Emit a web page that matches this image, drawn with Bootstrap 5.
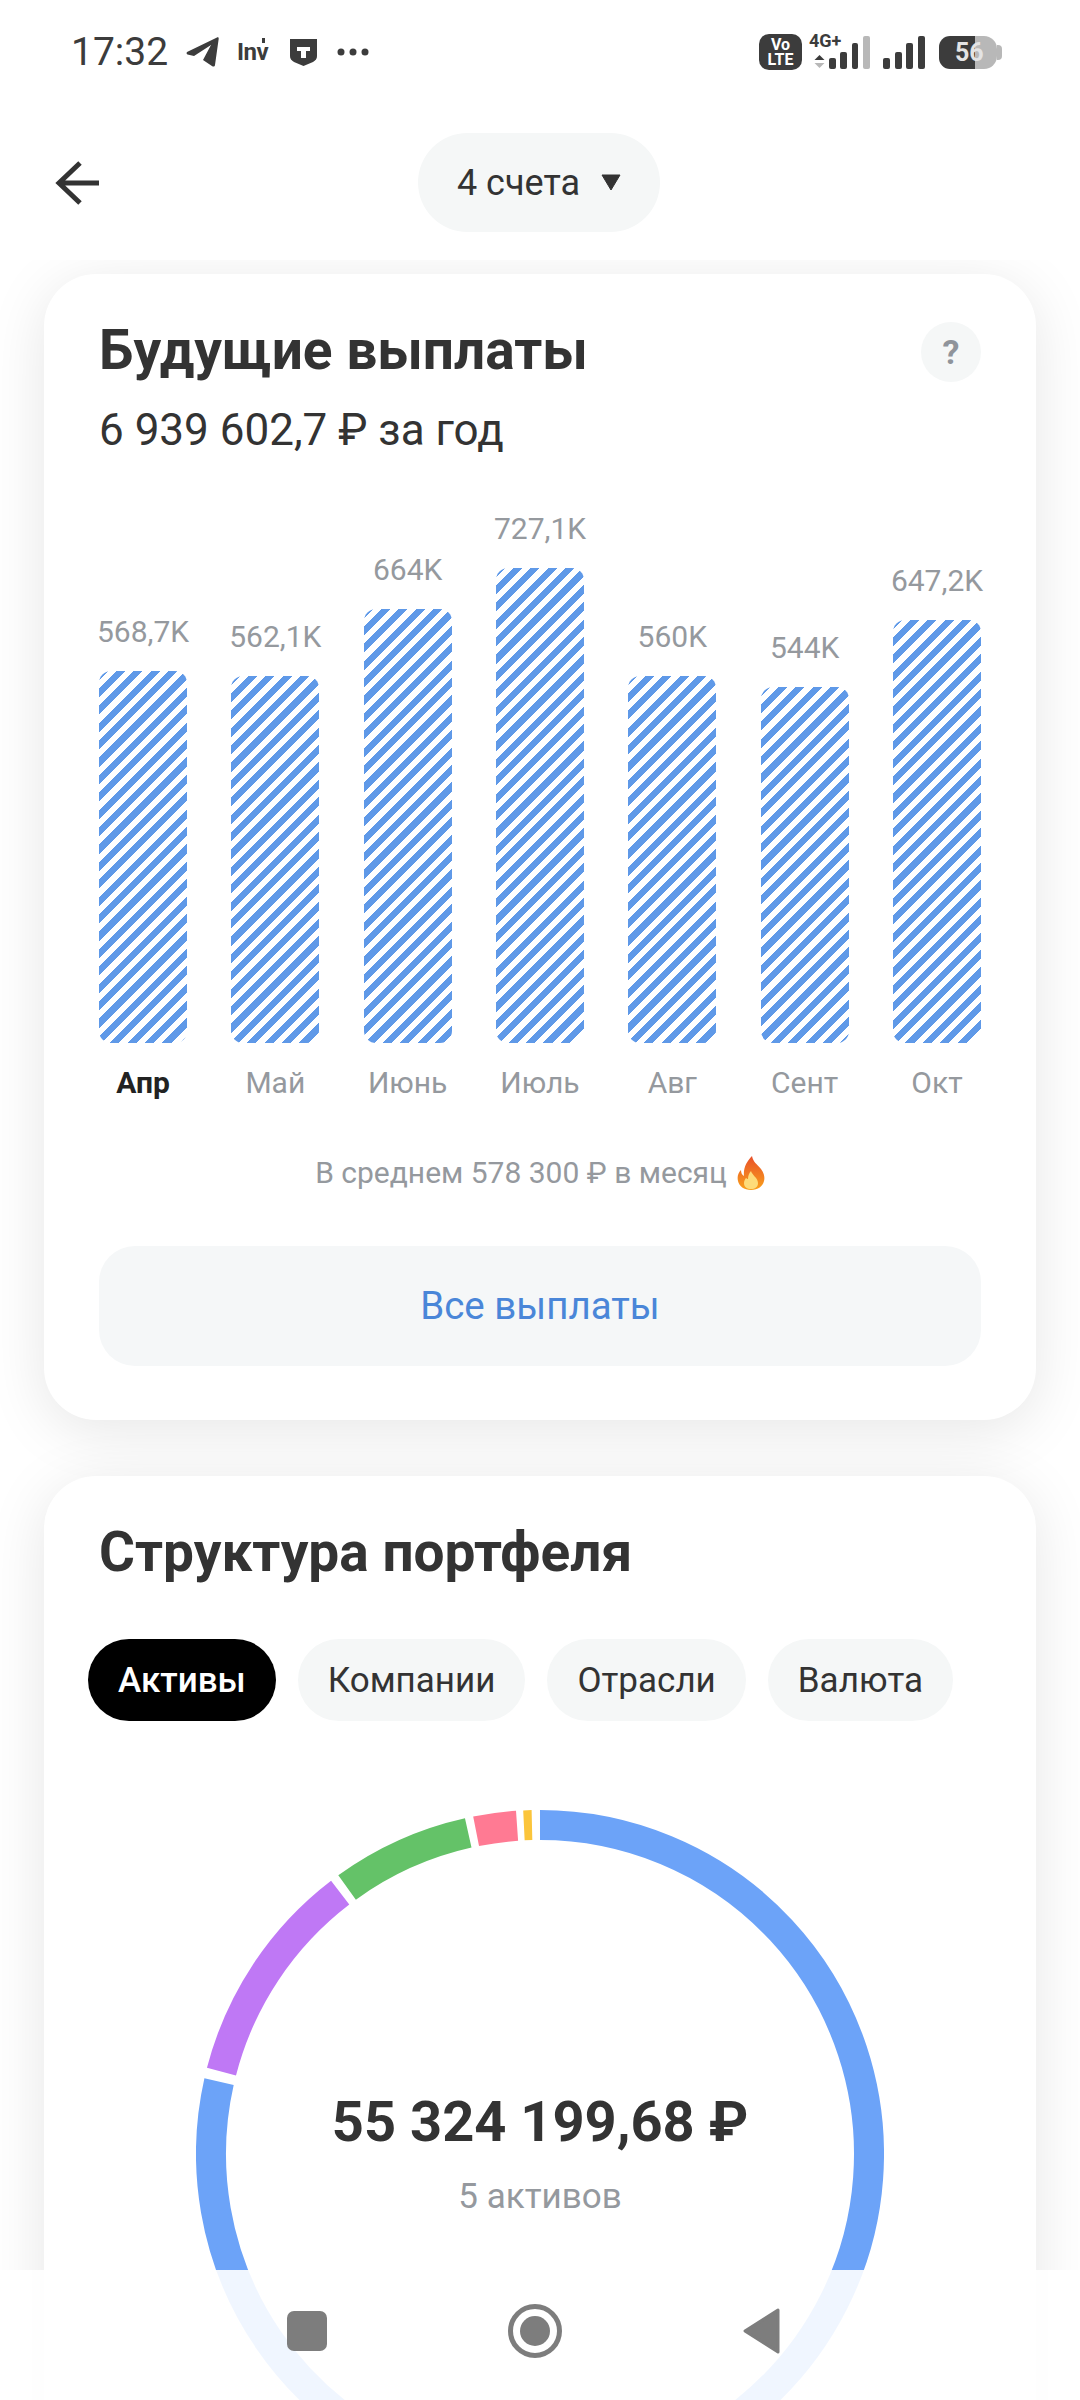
<!DOCTYPE html>
<html lang="ru">
<head>
  <meta charset="UTF-8">
  <meta name="viewport" content="width=device-width, initial-scale=1.0">
  <title>Будущие выплаты</title>
  <link href="https://cdn.jsdelivr.net/npm/bootstrap@5.3.0/dist/css/bootstrap.min.css" rel="stylesheet">
  <style>
    html, body {
      height: 2400px;
      overflow: hidden;
    }
    body {
      background-color: #fff;
      color: #333;
      font-family: Roboto, "Liberation Sans", sans-serif;
    }
    /* статус-бар */
    .status-row {
      height: 104px;
      padding: 0 83px 0 71px;
      color: #3c3c3c;
      background: #fff;
      position: relative;
      z-index: 2;
    }
    .status-time { font-size: 39px; line-height: 1; width: 97px; }
    .inv-mark { font-size: 24px; font-weight: 700; letter-spacing: -.5px; line-height: 1; width: 32px; margin-left: 18px; position: relative; }
    .inv-mark::after { content: ""; position: absolute; left: 25px; top: -2px; width: 3px; height: 5px; background: #3c3c3c; }
    .volte {
      width: 43px; height: 36px; border-radius: 10px;
      background: #3c3c3c; color: #fff;
      font-size: 16px; font-weight: 700; line-height: 15px; text-align: center;
      padding-top: 3px;
    }
    .net-type { font-size: 18px; font-weight: 700; line-height: 1; position: absolute; left: 7px; top: -2px; }
    .battery {
      width: 58px; height: 33px; margin-left: 14px; border-radius: 11px 13px 13px 11px;
      background: linear-gradient(90deg, #3c3c3c 36px, #b8b8b8 36px);
      color: #e4e4e4; font-size: 25px; font-weight: 700; line-height: 33px; padding-left: 16px;
      position: relative;
    }
    .battery::after { content: ""; position: absolute; right: -5px; top: 9px; width: 5px; height: 15px; border-radius: 0 4px 4px 0; background: #b8b8b8; }
    /* шапка */
    .top-row { height: 156px; padding: 29px 0 28px 55px; background: #fff; position: relative; z-index: 2; }
    .accounts-pill {
      background: #f5f7f7; color: #333; border: 0;
      width: 242px; height: 99px; font-size: 36px; line-height: 1;
      margin-left: 319px; gap: 21px;
    }
    /* карточки */
    .pay-card {
      margin: 14px 44px 0;
      border: 0;
      border-radius: 52px;
      box-shadow: 0 10px 60px rgba(0, 0, 0, .1);
    }
    .pay-body { padding: 46px 55px 54px; }
    .second-card { margin-top: 56px; }
    .second-card .pay-body { padding: 46px 44px 0; }
    .section-title { font-size: 55px; font-weight: 700; line-height: 60px; margin: 0; color: #333; }
    .second-card .section-title { margin-left: 11px; }
    .year-sum { font-size: 44px; line-height: 50px; margin: 23px 0 0; }
    .help-btn {
      width: 60px; height: 60px; background: #f5f7f7; color: #8f949b;
      font-size: 34px; font-weight: 700; line-height: 1; margin-top: 2px;
    }
    /* столбики */
    .bars-chart { height: 528px; margin-top: 60px; }
    .bar-col { width: 88px; }
    .bar-value { font-size: 30px; line-height: 36px; color: #95999e; white-space: nowrap; margin-bottom: 21px; }
    .bar-fill {
      width: 88px;
      border-radius: 12px;
      background: repeating-linear-gradient(135deg, #5f99e8 0 6.5px, #fff 6.5px 12.3px);
    }
    .months-row { margin-top: 20px; }
    .month-name { width: 88px; text-align: center; font-size: 30px; line-height: 40px; color: #95999e; white-space: nowrap; }
    .month-name.current { color: #222; font-weight: 700; }
    .avg-line { font-size: 30px; line-height: 40px; color: #95999e; margin-top: 50px; gap: 10px; }
    .payments-btn {
      display: block; width: 100%; height: 120px; margin-top: 53px;
      background: #f5f7f8; border: 0; border-radius: 36px;
      color: #4a86d8; font-size: 38.5px;
    }
    /* табы */
    .tab-row { margin-top: 57px; gap: 22px; }
    .tab-pill {
      height: 82px; padding: 0 30px; border: 0; border-radius: 41px;
      background: #f5f7f7; color: #333; font-size: 35px; line-height: 1;
    }
    .tab-pill.active { background: #000; color: #fff; font-weight: 500; }
    /* кольцо */
    .donut-wrap { width: 688px; height: 688px; margin: 89px auto 0; }
    .donut-center { inset: 0; }
    .donut-sum { font-size: 56px; font-weight: 700; line-height: 66px; color: #333; margin-top: 279px; }
    .donut-note { font-size: 35px; line-height: 40px; color: #95999e; margin-top: 22px; }
    /* нижняя панель */
    .android-nav {
      position: fixed; left: 0; right: 0; bottom: 0; height: 130px;
      background: rgba(255, 255, 255, .9);
    }
    .android-nav svg { position: absolute; }
  </style>
</head>
<body>

<!-- Статус-бар -->
<div class="status-row d-flex align-items-center">
  <span class="status-time">17:32</span>
  <svg style="margin-left:18px" width="33" height="30" viewBox="0 0 33 30"><path d="M1 15 31 .5c1-.4 1.800.2 1.700 1.200L29 28c-.2 1.500-1.500 2-2.700 1.200L17 23 25 8 8 19 1.500 17.500c-1-.3-1.200-1.800-.5-2.500z" fill="#3c3c3c"/></svg>
  <span class="inv-mark">Inv</span>
  <svg style="margin-left:21px" width="27" height="27" viewBox="0 0 27 27"><path d="M0 0h27v17c0 3-1.500 4.500-4 6l-9.500 4L4 23c-2.500-1.500-4-3-4-6z" fill="#3c3c3c"/><path d="M7 8h13v4h-4v7h-5v-7H7z" fill="#fff"/></svg>
  <svg style="margin-left:20px" width="32" height="8" viewBox="0 0 32 8"><circle cx="4" cy="4" r="3.500" fill="#3c3c3c"/><circle cx="16" cy="4" r="3.500" fill="#3c3c3c"/><circle cx="28" cy="4" r="3.500" fill="#3c3c3c"/></svg>
  <div class="ms-auto d-flex align-items-center">
    <div class="volte">Vo<br>LTE</div>
    <div class="position-relative" style="width:68px;height:36px">
      <span class="net-type">4G+</span>
      <svg class="position-absolute" style="left:0;top:0" width="68" height="36" viewBox="0 0 68 36">
        <path d="M17.500 21l5 5h-10z" fill="#3c3c3c"/><path d="M17.500 34l5-5h-10z" fill="#b8b8b8"/>
        <rect x="27" y="24" width="7" height="11" rx="2" fill="#3c3c3c"/>
        <rect x="38" y="18" width="7" height="17" rx="2" fill="#3c3c3c"/>
        <rect x="50" y="9" width="6" height="26" rx="2" fill="#3c3c3c"/>
        <rect x="61" y="2" width="7" height="33" rx="2" fill="#b8b8b8"/>
      </svg>
    </div>
    <svg style="margin-left:13px" width="42" height="33" viewBox="0 0 42 33">
      <rect x="0" y="22" width="7" height="11" rx="2" fill="#3c3c3c"/>
      <rect x="12" y="16" width="7" height="17" rx="2" fill="#3c3c3c"/>
      <rect x="23" y="7" width="7" height="26" rx="2" fill="#3c3c3c"/>
      <rect x="35" y="0" width="7" height="33" rx="2" fill="#3c3c3c"/>
    </svg>
    <div class="battery">56</div>
  </div>
</div>

<!-- Шапка -->
<div class="top-row d-flex align-items-center">
  <svg width="44" height="44" viewBox="0 0 44 44" fill="none" stroke="#333" stroke-width="5"><path d="M44 22H4M25 2 4 22l21 20"/></svg>
  <button class="accounts-pill btn rounded-pill d-flex align-items-center justify-content-center">
    4 счета
    <svg width="20" height="17" viewBox="0 0 20 17"><path d="M1 1h18l-9 15z" fill="#333" stroke="#333" stroke-linejoin="round"/></svg>
  </button>
</div>

<!-- Будущие выплаты -->
<div class="card pay-card">
  <div class="card-body pay-body">
    <div class="d-flex justify-content-between align-items-start">
      <h2 class="section-title">Будущие выплаты</h2>
      <div class="help-btn rounded-circle d-flex align-items-center justify-content-center">?</div>
    </div>
    <div class="year-sum">6 939 602,7 ₽ за год</div>
    <div class="bars-chart d-flex justify-content-between align-items-end" id="barsChart"></div>
    <div class="months-row d-flex justify-content-between" id="monthsRow"></div>
    <div class="avg-line d-flex align-items-center justify-content-center">
      В среднем 578 300 ₽ в месяц
      <svg width="28" height="34" viewBox="0 0 28 34">
        <defs><linearGradient id="flameGrad" x1="0" y1="0" x2="0" y2="1"><stop offset="0" stop-color="#e8502a"/><stop offset="1" stop-color="#f9a11b"/></linearGradient></defs>
        <path d="M15 0c1 6 5 8 9 13 3 4 4 8 3 12-1 5-6 9-13 9S2 30 1 25c-1-4 0-8 3-11 0 3 1 5 3 6C6 12 10 5 15 0z" fill="url(#flameGrad)"/>
        <path d="M14 15c1 4 7 7 7 12 0 4-3 6-7 6s-7-2-7-6c0-2 1-4 2-5 1 1 2 1 2 1 0-3 1-6 3-8z" fill="#fddc7a"/>
      </svg>
    </div>
    <button class="payments-btn btn">Все выплаты</button>
  </div>
</div>

<!-- Структура портфеля -->
<div class="card pay-card second-card">
  <div class="card-body pay-body">
    <h2 class="section-title">Структура портфеля</h2>
    <div class="tab-row d-flex">
      <button class="tab-pill active btn">Активы</button>
      <button class="tab-pill btn">Компании</button>
      <button class="tab-pill btn">Отрасли</button>
      <button class="tab-pill btn">Валюта</button>
    </div>
    <div class="donut-wrap position-relative">
      <svg width="688" height="688" viewBox="0 0 688 688" fill="none" stroke-width="30" id="donut"></svg>
      <div class="donut-center position-absolute text-center">
        <div class="donut-sum">55 324 199,68 ₽</div>
        <div class="donut-note">5 активов</div>
      </div>
    </div>
  </div>
</div>

<!-- Навигация Android -->
<div class="android-nav">
  <svg style="left:287px;top:41px" width="40" height="40" viewBox="0 0 40 40"><rect width="40" height="40" rx="7" fill="#7d7d7d"/></svg>
  <svg style="left:508px;top:34px" width="54" height="54" viewBox="0 0 54 54"><circle cx="27" cy="27" r="24.500" fill="none" stroke="#7d7d7d" stroke-width="5"/><circle cx="27" cy="27" r="15" fill="#7d7d7d"/></svg>
  <svg style="left:743px;top:38px" width="37" height="46" viewBox="0 0 37 46"><path d="M35 2v42L2 23z" fill="#7d7d7d" stroke="#7d7d7d" stroke-width="3" stroke-linejoin="round"/></svg>
</div>

<script src="https://cdn.jsdelivr.net/npm/bootstrap@5.3.0/dist/js/bootstrap.bundle.min.js"></script>
<script>
  const payments = [
    { month: "Апр", label: "568,7K", top: 671 },
    { month: "Май", label: "562,1K", top: 676 },
    { month: "Июнь", label: "664K", top: 609 },
    { month: "Июль", label: "727,1K", top: 568 },
    { month: "Авг", label: "560K", top: 676 },
    { month: "Сент", label: "544K", top: 687 },
    { month: "Окт", label: "647,2K", top: 620 },
  ];
  const barsBottom = 1043;

  // Столбики и подписи месяцев
  const barsChart = document.getElementById("barsChart");
  const monthsRow = document.getElementById("monthsRow");
  payments.forEach((p, i) => {
    barsChart.innerHTML += `
      <div class="bar-col d-flex flex-column align-items-center">
        <div class="bar-value">${p.label}</div>
        <div class="bar-fill" style="height: ${barsBottom - p.top}px"></div>
      </div>`;
    monthsRow.innerHTML += `<div class="month-name${i === 0 ? " current" : ""}">${p.month}</div>`;
  });

  // Сегменты кольца, углы в градусах от верха по часовой
  const segments = [
    { color: "#6ca3f8", from: 0, to: 282.7 },
    { color: "#bf78f5", from: 284.5, to: 322.6 },
    { color: "#64c268", from: 324.1, to: 347.4 },
    { color: "#ff7a93", from: 348.8, to: 356 },
    { color: "#fbc53b", from: 357.2, to: 358.6 },
  ];
  function point(deg) {
    const a = deg * Math.PI / 180;
    return `${(344 + 329 * Math.sin(a)).toFixed(2)} ${(344 - 329 * Math.cos(a)).toFixed(2)}`;
  }
  document.getElementById("donut").innerHTML = segments.map(s => {
    const large = s.to - s.from > 180 ? 1 : 0;
    return `<path d="M${point(s.from)}A329 329 0 ${large} 1 ${point(s.to)}" stroke="${s.color}"/>`;
  }).join("");
</script>

</body>
</html>
